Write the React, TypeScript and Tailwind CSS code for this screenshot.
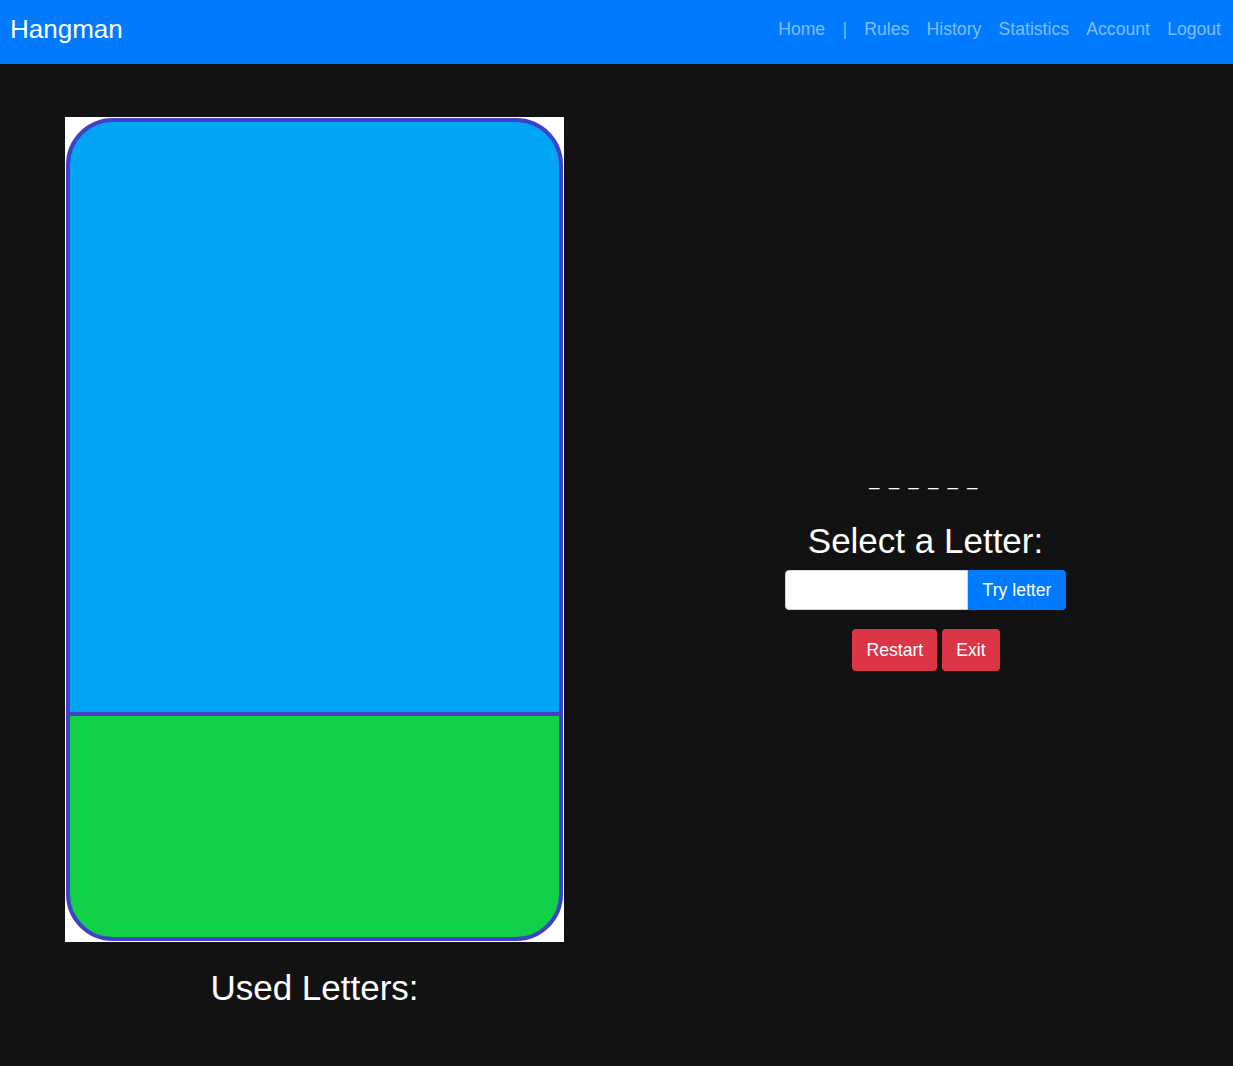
import React from "react";

function Gallows() {
  return (
    <svg width="499" height="825" viewBox="0 0 499 825" className="block">
      <defs>
        <clipPath id="rr">
          <rect x="3" y="3" width="493" height="819" rx="45" ry="45" />
        </clipPath>
      </defs>
      <rect x="0" y="0" width="499" height="825" fill="#ffffff" />
      <g clipPath="url(#rr)">
        <rect x="0" y="0" width="499" height="597" fill="#00a6f4" />
        <rect x="0" y="597" width="499" height="228" fill="#10d048" />
        <line x1="0" y1="597" x2="499" y2="597" stroke="#4040c8" strokeWidth="4" />
      </g>
      <rect x="3" y="3" width="493" height="819" rx="45" ry="45" fill="none" stroke="#4040c8" strokeWidth="4" />
    </svg>
  );
}

export default function App() {
  const font = { fontFamily: '"Liberation Sans", Arial, sans-serif' };
  return (
    <div className="min-h-[1066px] bg-[#121212] text-white" style={font}>
      <nav className="h-16 bg-[#007bff] flex items-center justify-between pl-[10px] pr-[12px]">
        <div className="text-[26px] text-white pb-[7px] leading-none">Hangman</div>
        <div className="flex items-center gap-[17.3px] text-[17.6px] text-[#80bdff] pb-[4px] leading-none">
          <span>Home</span>
          <span>|</span>
          <span>Rules</span>
          <span>History</span>
          <span>Statistics</span>
          <span>Account</span>
          <span>Logout</span>
        </div>
      </nav>
      <div className="grid grid-cols-2 pl-[9px] pr-[2px]">
        <div className="flex flex-col items-center pt-[53px]">
          <Gallows />
          <h2 className="mt-[25px] text-[35px] leading-[42px]">Used Letters:</h2>
        </div>
        <div className="flex flex-col items-center pt-[402px]">
          <div className="text-[18px] leading-[27px] tracking-[2.3px] pr-[2px]">_ _ _ _ _ _</div>
          <h2 className="mt-[27px] text-[35px] leading-[42px]">Select a Letter:</h2>
          <div className="mt-[8px] flex">
            <input
              type="text"
              className="w-[183px] h-[40px] bg-white rounded-l-[4px] border border-[#ced4da] outline-none px-3 text-black"
            />
            <button className="h-[40px] w-[98px] bg-[#007bff] text-white text-[17.6px] rounded-r-[4px]">
              Try letter
            </button>
          </div>
          <div className="mt-[19px] flex gap-[5px] pl-[1px]">
            <button className="h-[42px] px-[14px] bg-[#dc3545] text-white text-[17.6px] rounded-[4px]">Restart</button>
            <button className="h-[42px] px-[14px] bg-[#dc3545] text-white text-[17.6px] rounded-[4px]">Exit</button>
          </div>
        </div>
      </div>
    </div>
  );
}
